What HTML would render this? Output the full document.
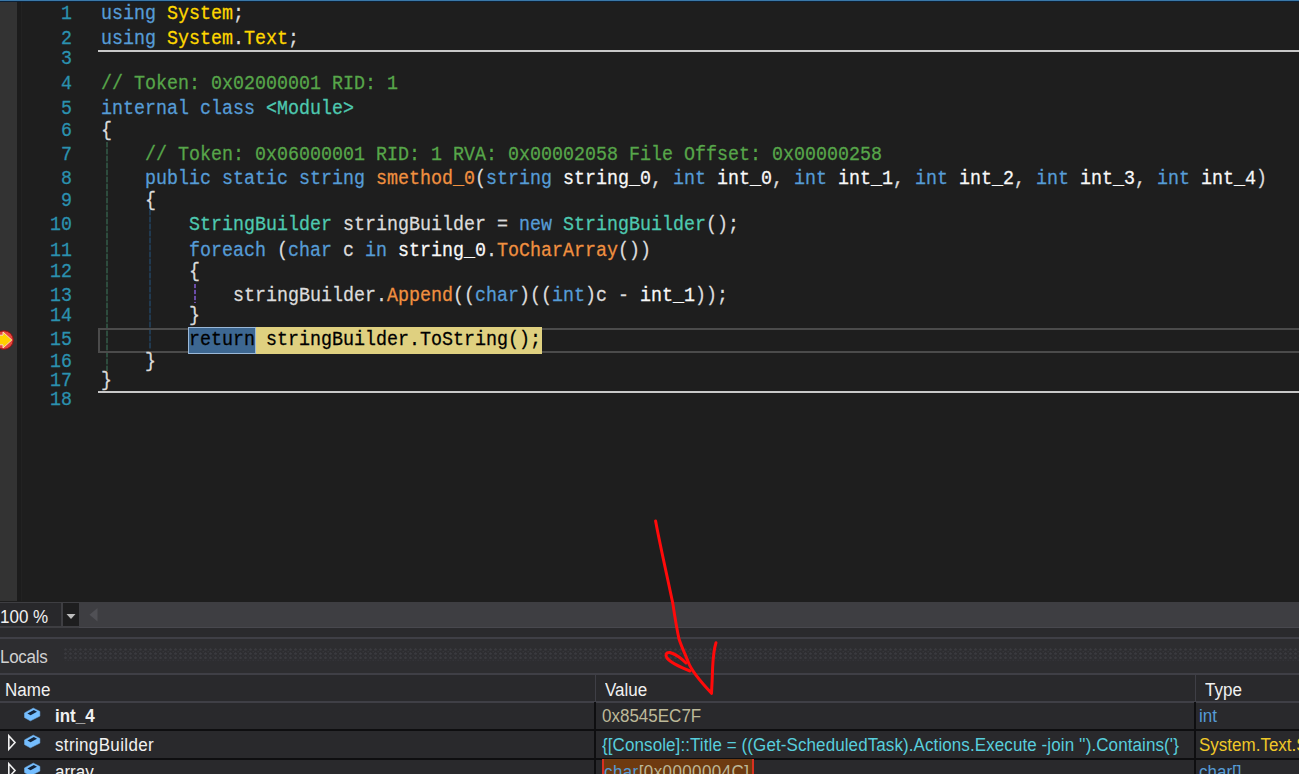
<!DOCTYPE html>
<html><head><meta charset="utf-8">
<style>
*{margin:0;padding:0;box-sizing:border-box}
html,body{width:1299px;height:774px;overflow:hidden;background:#1e1e1e}
.a{position:absolute}
.mono{font-family:"Liberation Mono",monospace;font-size:18.333px;line-height:21px;white-space:pre;color:#dcdcdc;-webkit-text-stroke:0.25px currentColor}
.ln{position:absolute;left:0;width:72px;text-align:right;color:#2b91af;transform:scaleY(1.08);transform-origin:0 15.5px}
.cl{position:absolute;left:101px;transform:scaleY(1.08);transform-origin:0 15.5px}
.k{color:#569cd6}
.t{color:#4ec9b0}
.n{color:#ffd700}
.c{color:#57a64a}
.m{color:#f09040}
.p{color:#f8f8f8}
.sans{font-family:"Liberation Sans",sans-serif;white-space:pre;font-size:17px;line-height:20px;transform:scaleY(1.06);transform-origin:0 16px}
</style></head><body>
<!-- editor -->
<div class="a" style="left:0;top:0;width:1299px;height:602px;background:#1e1e1e"></div>
<div class="a" style="left:0;top:0;width:17px;height:601px;background:#333333"></div>
<div class="a" style="left:17px;top:2px;width:3.5px;height:599px;background:#1c1c1c"></div>
<div class="a" style="left:21px;top:2px;width:1px;height:599px;background:#222222"></div>
<div class="a" style="left:0;top:0;width:1299px;height:1px;background:#3a78a8"></div>
<div class="a" style="left:0;top:1px;width:1299px;height:1px;background:#0c2036"></div>


<!-- separators -->
<div class="a" style="left:98px;top:50px;width:1201px;height:2px;background:#c8c8c8"></div>
<div class="a" style="left:98px;top:391px;width:1201px;height:2px;background:#c8c8c8"></div>
<!-- indent guides -->
<div class="a" style="left:105.5px;top:142px;width:2px;height:229px;background:repeating-linear-gradient(to bottom,#2e4c3e 0 5px,#213129 5px 7px)"></div>
<div class="a" style="left:148.5px;top:210px;width:2px;height:139px;background:repeating-linear-gradient(to bottom,#213a50 0 5px,#1f2a35 5px 7px)"></div>
<div class="a" style="left:194px;top:284px;width:1.5px;height:19px;background:repeating-linear-gradient(to bottom,#6a4ca8 0 4px,#2a2036 4px 6px)"></div>
<!-- current line box -->
<div class="a" style="left:98px;top:328px;width:1210px;height:25px;border:2.8px solid #4b4b4b;border-right:none"></div>
<!-- statement highlight -->
<div class="a" style="left:255px;top:327px;width:287px;height:27px;background:#dfd080"></div>
<div class="a" style="left:188px;top:327px;width:68px;height:27px;background:#3d6791;border:1px solid #9ab8d8"></div>
<!-- breakpoint -->
<svg class="a" style="left:0;top:326px" width="17" height="28" viewBox="0 0 17 28">
<circle cx="4" cy="14" r="9.3" fill="#e8453c" stroke="#8a1010" stroke-width="1"/>
<path d="M-3 9.2 H3 V6 L11.8 14 L3 22 V18.8 H-3 Z" fill="#ffd200" stroke="#f6e2cc" stroke-width="0.9" stroke-linejoin="round"/>
</svg>
<div class="mono" id="code">
<div class="ln" style="top:3.7px">1</div>
<div class="ln" style="top:29.3px">2</div>
<div class="ln" style="top:49.2px">3</div>
<div class="ln" style="top:73.5px">4</div>
<div class="ln" style="top:99.3px">5</div>
<div class="ln" style="top:120.7px">6</div>
<div class="ln" style="top:144.9px">7</div>
<div class="ln" style="top:169.3px">8</div>
<div class="ln" style="top:190.6px">9</div>
<div class="ln" style="top:214.8px">10</div>
<div class="ln" style="top:240.6px">11</div>
<div class="ln" style="top:261.7px">12</div>
<div class="ln" style="top:285.7px">13</div>
<div class="ln" style="top:306.0px">14</div>
<div class="ln" style="top:330.4px">15</div>
<div class="ln" style="top:351.8px">16</div>
<div class="ln" style="top:370.5px">17</div>
<div class="ln" style="top:390.2px">18</div>

<div class="cl" style="top:3.7px"><span class="k">using</span> <span class="n">System</span>;</div>
<div class="cl" style="top:29.3px"><span class="k">using</span> <span class="n">System</span>.<span class="n">Text</span>;</div>
<div class="cl" style="top:73.5px"><span class="c">// Token: 0x02000001 RID: 1</span></div>
<div class="cl" style="top:99.3px"><span class="k">internal</span> <span class="k">class</span> <span class="t">&lt;Module&gt;</span></div>
<div class="cl" style="top:120.7px">{</div>
<div class="cl" style="top:144.9px">    <span class="c">// Token: 0x06000001 RID: 1 RVA: 0x00002058 File Offset: 0x00000258</span></div>
<div class="cl" style="top:169.3px">    <span class="k">public</span> <span class="k">static</span> <span class="k">string</span> <span class="m">smethod_0</span>(<span class="k">string</span> <span class="p">string_0</span>, <span class="k">int</span> <span class="p">int_0</span>, <span class="k">int</span> <span class="p">int_1</span>, <span class="k">int</span> <span class="p">int_2</span>, <span class="k">int</span> <span class="p">int_3</span>, <span class="k">int</span> <span class="p">int_4</span>)</div>
<div class="cl" style="top:190.6px">    {</div>
<div class="cl" style="top:214.8px">        <span class="t">StringBuilder</span> stringBuilder = <span class="k">new</span> <span class="t">StringBuilder</span>();</div>
<div class="cl" style="top:240.6px">        <span class="k">foreach</span> (<span class="k">char</span> c <span class="k">in</span> <span class="p">string_0</span>.<span class="m">ToCharArray</span>())</div>
<div class="cl" style="top:261.7px">        {</div>
<div class="cl" style="top:285.7px">            stringBuilder.<span class="m">Append</span>((<span class="k">char</span>)((<span class="k">int</span>)c - <span class="p">int_1</span>));</div>
<div class="cl" style="top:306.0px">        }</div>
<div class="cl" style="top:330.4px;color:#000">        return stringBuilder.ToString();</div>
<div class="cl" style="top:351.8px">    }</div>
<div class="cl" style="top:370.5px">}</div>
</div>

<!-- bottom -->
<div class="a" style="left:0;top:602px;width:1299px;height:26px;background:#3e3e42"></div>
<div class="a" style="left:0;top:603px;width:61px;height:23px;background:#28282b"></div>
<div class="a sans" style="left:0;top:607.5px;color:#f1f1f1">100 %</div>
<div class="a" style="left:63px;top:603px;width:16px;height:23px;background:#1e1e1f"></div>
<svg class="a" style="left:63px;top:603px" width="16" height="23"><path d="M3.5 11 L12.5 11 L8 16 Z" fill="#bdbdbd"/></svg>
<svg class="a" style="left:86px;top:603px" width="16" height="23"><path d="M11.5 5 L11.5 18.5 L3.5 11.75 Z" fill="#505055"/></svg>
<div class="a" style="left:0;top:628px;width:1299px;height:10px;background:#2a2a2d"></div>
<div class="a" style="left:79px;top:626.5px;width:1220px;height:1.5px;background:#48484e"></div>
<div class="a" style="left:0;top:637px;width:1299px;height:2px;background:#3f3f46"></div>
<div class="a" style="left:0;top:639px;width:1299px;height:34px;background:#2d2d30"></div>
<div class="a sans" style="left:0;top:648px;color:#d0d0d0;letter-spacing:-0.3px">Locals</div>
<div class="a" style="left:64px;top:648px;width:1235px;height:13px;background-image:radial-gradient(circle at 1.5px 1.5px,#3a3a3f 1px,transparent 1.4px),radial-gradient(circle at 4.5px 4.5px,#3a3a3f 1px,transparent 1.4px);background-size:5px 4.2px"></div>
<div class="a" style="left:0;top:673px;width:1299px;height:2px;background:#3f3f46"></div>
<!-- grid -->
<div class="a" style="left:0;top:675px;width:1299px;height:99px;background:#29292c"></div>
<div class="a" style="left:0;top:701px;width:1299px;height:1.5px;background:#3f3f46"></div>
<div class="a" style="left:0;top:729px;width:1299px;height:2px;background:#0e0e10"></div>
<div class="a" style="left:0;top:757.5px;width:1299px;height:2px;background:#0e0e10"></div>
<div class="a" style="left:595px;top:675px;width:1px;height:26px;background:#3f3f46"></div>
<div class="a" style="left:1195px;top:675px;width:1px;height:26px;background:#3f3f46"></div>
<div class="a" style="left:594px;top:702px;width:2px;height:72px;background:#0e0e10"></div>
<div class="a" style="left:1194px;top:702px;width:2px;height:72px;background:#0e0e10"></div>
<div class="a sans" style="left:5px;top:681px;color:#f1f1f1">Name</div>
<div class="a sans" style="left:605px;top:681px;color:#f1f1f1">Value</div>
<div class="a sans" style="left:1205px;top:681px;color:#f1f1f1">Type</div>

<!-- row icons -->
<svg class="a" style="left:22px;top:706.5px" width="20" height="18" viewBox="0 0 20 18"><path d="M2.6 5.9 L11.3 1.2 L17.8 4.4 L17.8 9.1 L8.4 13.8 L2.6 10.6 Z" fill="#75beff" stroke="#75beff" stroke-width="0.6" stroke-linejoin="round"/><path d="M5.4 6.4 L11.8 3.1 L15 4.8 L8.6 8.2 Z" fill="#14243a"/></svg>
<svg class="a" style="left:22px;top:734px" width="20" height="18" viewBox="0 0 20 18"><path d="M2.6 5.9 L11.3 1.2 L17.8 4.4 L17.8 9.1 L8.4 13.8 L2.6 10.6 Z" fill="#75beff" stroke="#75beff" stroke-width="0.6" stroke-linejoin="round"/><path d="M5.4 6.4 L11.8 3.1 L15 4.8 L8.6 8.2 Z" fill="#14243a"/></svg>
<svg class="a" style="left:22px;top:762px" width="20" height="18" viewBox="0 0 20 18"><path d="M2.6 5.9 L11.3 1.2 L17.8 4.4 L17.8 9.1 L8.4 13.8 L2.6 10.6 Z" fill="#75beff" stroke="#75beff" stroke-width="0.6" stroke-linejoin="round"/><path d="M5.4 6.4 L11.8 3.1 L15 4.8 L8.6 8.2 Z" fill="#14243a"/></svg>
<svg class="a" style="left:4px;top:733px" width="14" height="20"><path d="M4.8 2.8 L11 9.5 L4.8 16.2 Z" fill="none" stroke="#f0f0f0" stroke-width="1.6"/></svg>
<svg class="a" style="left:4px;top:761px" width="14" height="20"><path d="M4.8 2.8 L11 9.5 L4.8 16.2 Z" fill="none" stroke="#f0f0f0" stroke-width="1.6"/></svg>

<div class="a sans" style="left:55px;top:707px;color:#f1f1f1;font-weight:bold">int_4</div>
<div class="a sans" style="left:55px;top:736px;color:#f1f1f1;letter-spacing:0.35px">stringBuilder</div>
<div class="a sans" style="left:55px;top:763px;color:#f1f1f1">array</div>

<div class="a sans" style="left:602px;top:707px;color:#bdb999">0x8545EC7F</div>
<div class="a sans" style="left:602px;top:736px;color:#58cedc;letter-spacing:0.09px">{[Console]::Title = ((Get-ScheduledTask).Actions.Execute -join '').Contains('}</div>
<div class="a" style="left:602px;top:759px;width:152px;height:20px;background:#6e3a10;border-left:2px solid #d83020;border-right:2px solid #d83020"></div>
<div class="a sans" style="left:604px;top:763px;color:#bdb999;letter-spacing:0.4px"><span style="color:#569cd6">char</span>[0x0000004C]</div>

<div class="a sans" style="left:1199px;top:707px;color:#569cd6">int</div>
<div class="a sans" style="left:1199px;top:736px;color:#f0c828">System.Text.StringBuilder</div>
<div class="a sans" style="left:1199px;top:763px;color:#569cd6">char[]</div>

<!-- red arrow -->
<svg class="a" style="left:0;top:0" width="1299" height="774" viewBox="0 0 1299 774">
<path d="M655.6 521 C 660 545, 668 580, 672.8 603.4 C 675 618, 677 630, 679 639 C 682 648, 686 656, 688 661.6 C 691 670, 697 678, 711.5 693.3 C 712 685, 712.4 675, 712.6 668 C 713 660, 713.5 650, 716 642.7" fill="none" stroke="#ff0a0a" stroke-width="3" stroke-linecap="round" stroke-linejoin="round"/>
<path d="M690 671 C 680 667, 670 662, 667 658 C 665 655, 666 652, 670 652.5 C 675 654, 681 658, 686 663" fill="none" stroke="#ff0a0a" stroke-width="3" stroke-linecap="round" stroke-linejoin="round"/>
</svg>

</body></html>
